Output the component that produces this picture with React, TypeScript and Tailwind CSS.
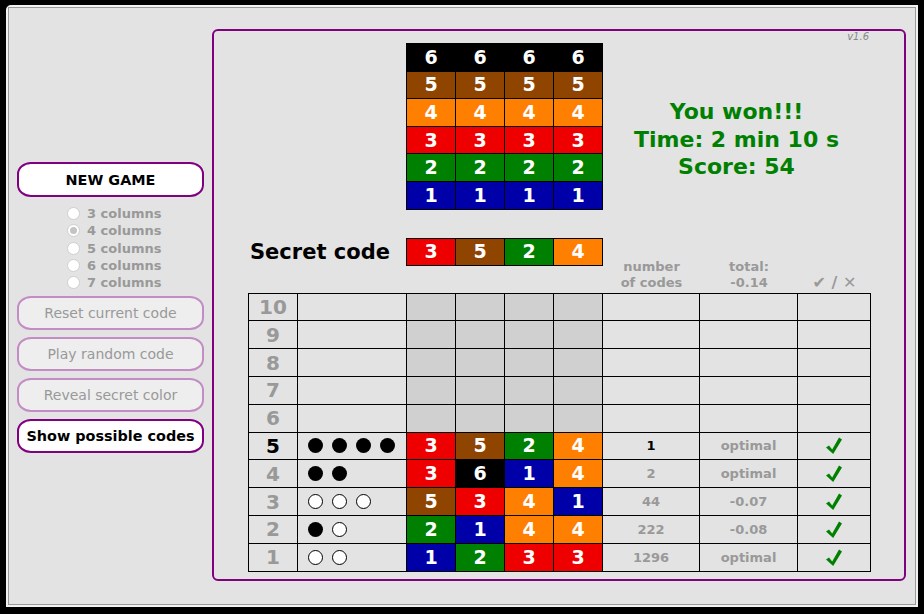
import React from 'react';

const COLORS: Record<number, string> = {
  1: 'bg-[#0000a8]',
  2: 'bg-[#008000]',
  3: 'bg-[#ee0000]',
  4: 'bg-[#ff7f00]',
  5: 'bg-[#8f4400]',
  6: 'bg-black',
};

type Row = {
  n: number;
  pegs?: ('b' | 'w')[];
  code?: number[];
  count?: string;
  total?: string;
  current?: boolean;
};

const ROWS: Row[] = [
  { n: 10 },
  { n: 9 },
  { n: 8 },
  { n: 7 },
  { n: 6 },
  { n: 5, pegs: ['b', 'b', 'b', 'b'], code: [3, 5, 2, 4], count: '1', total: 'optimal', current: true },
  { n: 4, pegs: ['b', 'b'], code: [3, 6, 1, 4], count: '2', total: 'optimal' },
  { n: 3, pegs: ['w', 'w', 'w'], code: [5, 3, 4, 1], count: '44', total: '-0.07' },
  { n: 2, pegs: ['b', 'w'], code: [2, 1, 4, 4], count: '222', total: '-0.08' },
  { n: 1, pegs: ['w', 'w'], code: [1, 2, 3, 3], count: '1296', total: 'optimal' },
];

const FONT = "font-['DejaVu_Sans',Verdana,sans-serif]";

function ColorCell({ c }: { c: number }) {
  return (
    <div className={`${COLORS[c]} flex items-center justify-center text-[19px] font-bold leading-none text-white`}>
      {c}
    </div>
  );
}

function Check() {
  return (
    <svg width="16" height="17" viewBox="0 0 16 17">
      <polygon points="0,10.5 3,8.5 6.2,12.5 13,0.5 16,2.5 7.2,17" fill="#008000" />
    </svg>
  );
}

function Radio({ label, checked }: { label: string; checked?: boolean }) {
  return (
    <div className="flex h-[17.3px] items-center">
      <span className="flex h-[13px] w-[13px] items-center justify-center rounded-full border border-[#cfcfcf] bg-white">
        {checked && <span className="h-[7px] w-[7px] rounded-full bg-[#c4c4c4]" />}
      </span>
      <span className="ml-[7px] text-[13px] font-bold text-[#999]">{label}</span>
    </div>
  );
}

function SideButton({ label, active }: { label: string; active?: boolean }) {
  return (
    <button
      className={
        active
          ? 'h-[34px] w-full rounded-[14px/12px] border-2 border-[#800080] bg-white text-[14.4px] font-bold text-black'
          : 'h-[34px] w-full rounded-[14px/12px] border-2 border-[#c48cc4] bg-[#eeeeee] text-[14px] text-[#999]'
      }
    >
      {label}
    </button>
  );
}

export default function App() {
  return (
    <div className={`h-[614px] w-[924px] overflow-hidden bg-black pl-[6px] pt-[5px] ${FONT}`}>
      <div className="h-[602px] w-[912px] rounded-tl-[5px] border-2 border-[#f2f2f2]">
        <div className="flex h-full w-full border border-[#9a9a9a] bg-[#e3e3e3]">
          {/* left controls */}
          <div className="ml-[8px] w-[187px] pt-[154px]">
            <button className="h-[35px] w-full rounded-[14px/12px] border-2 border-[#800080] bg-white pt-[2px] text-[14.4px] font-bold text-black">
              NEW GAME
            </button>
            <div className="mt-[8px] pl-[50px]">
              <Radio label="3 columns" />
              <Radio label="4 columns" checked />
              <Radio label="5 columns" />
              <Radio label="6 columns" />
              <Radio label="7 columns" />
            </div>
            <div className="mt-[5px] flex flex-col gap-[7px]">
              <SideButton label="Reset current code" />
              <SideButton label="Play random code" />
              <SideButton label="Reveal secret color" />
              <SideButton label="Show possible codes" active />
            </div>
          </div>

          {/* game panel */}
          <div className="ml-[8px] mt-[21px] h-[552px] w-[694px] rounded-[6px] border-2 border-[#800080] pl-[34px]">
            <div className="flex h-[12px] justify-end pr-[35px] text-[10px] leading-[12px] italic text-[#888]">v1.6</div>

            <div className="flex">
              <div className="ml-[158px] grid auto-rows-[26.6px] grid-cols-[48px_48px_48px_48px] gap-px bg-black p-px">
                {[6, 5, 4, 3, 2, 1].map((c) => [0, 1, 2, 3].map((i) => <ColorCell key={`${c}-${i}`} c={c} />))}
              </div>
              <div className="flex-1 pr-[34px] pt-[55px] text-center text-[22px] font-bold leading-[27.5px] text-[#008000]">
                <div>You won!!!</div>
                <div>Time: 2 min 10 s</div>
                <div>Score: 54</div>
              </div>
            </div>

            <div className="mt-[28px] flex h-[55px]">
              <div className="w-[158px] pl-[2px] text-[21px] font-bold leading-[28px] text-black">Secret code</div>
              <div className="grid h-[28px] auto-rows-[26px] grid-cols-[48px_48px_48px_48px] gap-px bg-black p-px">
                {[3, 5, 2, 4].map((c, i) => (
                  <ColorCell key={i} c={c} />
                ))}
              </div>
              <div className="flex items-end pb-[2px] text-[13px] font-bold leading-[16px] text-[#999]">
                <div className="w-[97px] text-center">
                  number
                  <br />
                  of codes
                </div>
                <div className="w-[98px] text-center">
                  total:
                  <br />
                  -0.14
                </div>
                <div className="w-[73px] text-center text-[16px]">✔ / ✕</div>
              </div>
            </div>

            <div className="grid w-fit auto-rows-[26.8px] grid-cols-[48px_108px_48px_48px_48px_48px_96px_97px_72px] gap-px overflow-hidden bg-black p-px">
              {ROWS.map((r) => (
                <React.Fragment key={r.n}>
                  <div
                    className={`flex items-center justify-center bg-[#e3e3e3] text-[20px] font-bold leading-none ${
                      r.current ? 'text-black' : 'text-[#999]'
                    }`}
                  >
                    {r.n}
                  </div>
                  <div className="flex items-center gap-[9px] bg-[#e3e3e3] pl-[10px]">
                    {r.pegs?.map((p, i) => (
                      <span
                        key={i}
                        className={
                          p === 'b'
                            ? 'h-[15px] w-[15px] rounded-full bg-black'
                            : 'h-[15px] w-[15px] rounded-full border-[1.5px] border-black bg-white'
                        }
                      />
                    ))}
                  </div>
                  {r.code
                    ? r.code.map((c, i) => <ColorCell key={i} c={c} />)
                    : [0, 1, 2, 3].map((i) => <div key={i} className="bg-[#d0d0d0]" />)}
                  <div
                    className={`flex items-center justify-center bg-[#e3e3e3] text-[13px] font-bold leading-none ${
                      r.current ? 'text-black' : 'text-[#999]'
                    }`}
                  >
                    {r.count}
                  </div>
                  <div className="flex items-center justify-center bg-[#e3e3e3] text-[13px] font-bold leading-none text-[#999]">
                    {r.total}
                  </div>
                  <div className="flex items-center justify-center bg-[#e3e3e3]">{r.count && <Check />}</div>
                </React.Fragment>
              ))}
            </div>
          </div>
        </div>
      </div>
    </div>
  );
}
